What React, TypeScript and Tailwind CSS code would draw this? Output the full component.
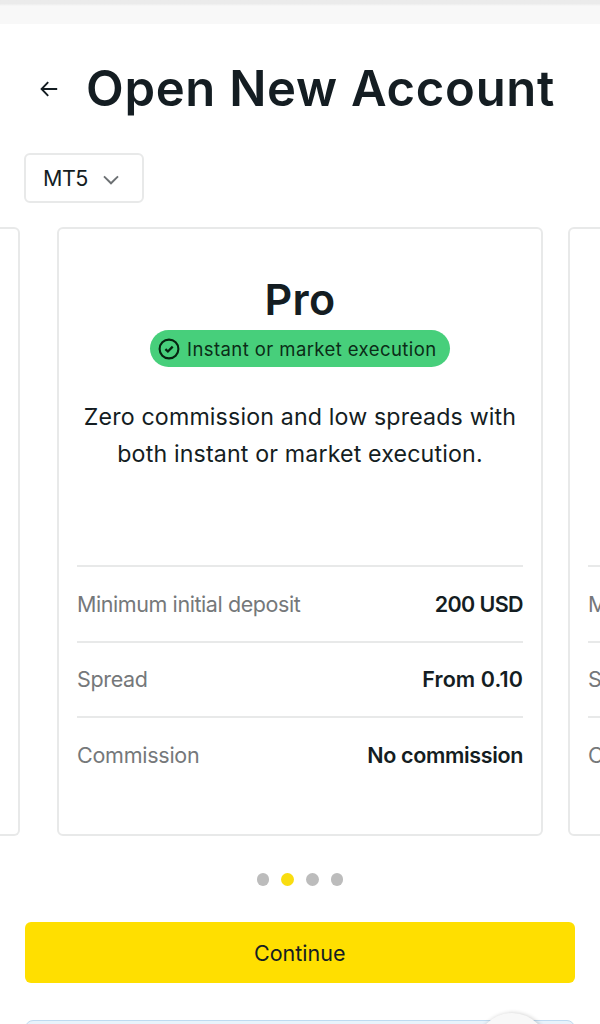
import { useState } from "react";

type Account = {
    name: string;
    badge: string;
    description: string[];
    details: { label: string; value: string }[];
};

const proAccount: Account = {
    name: "Pro",
    badge: "Instant or market execution",
    description: ["Zero commission and low spreads with", "both instant or market execution."],
    details: [
        { label: "Minimum initial deposit", value: "200 USD" },
        { label: "Spread", value: "From 0.10" },
        { label: "Commission", value: "No commission" },
    ],
};

const labelTracking = ["tracking-[-0.42px]", "tracking-[-0.35px]", "tracking-[-0.25px]"];
const valueTracking = ["tracking-[-0.6px]", "tracking-[0.1px]", "tracking-[-0.35px]"];

const ArrowLeft = () => (
    <svg width="18" height="16" viewBox="0 0 18 16" fill="none" stroke="#141d22" strokeWidth="1.9">
        <path d="M8.2 1.2 1.6 8l6.6 6.8M1.6 8H17.2" />
    </svg>
);

const ChevronDown = () => (
    <svg width="16" height="10" viewBox="0 0 16 10" fill="none" stroke="#6c7073" strokeWidth="1.9">
        <path d="m1 1.4 7 6.9 7-6.9" />
    </svg>
);

const CheckBadge = () => (
    <svg width="22" height="22" viewBox="0 0 22 22" fill="none" stroke="#062410" strokeWidth="2.1">
        <circle cx="11" cy="11" r="9.4" />
        <path d="m7.4 11.1 2.5 2.4 4.8-4.9" strokeWidth="2.3" />
    </svg>
);

const AccountCard = ({ account }: { account: Account }) => (
    <div className="flex h-[609px] w-[486px] shrink-0 flex-col rounded-md border-2 border-[#e8e9e9] bg-white px-[18px]">
        <h2 className="mt-[45px] text-center text-[43px] leading-[50px] font-semibold tracking-[0.3px]">{account.name}</h2>
        <div className="mt-[6px] flex h-[37px] w-[300px] items-center gap-[7px] self-center rounded-full bg-[#47cf7b] pl-2 text-[#0b2c17]">
            <CheckBadge />
            <span className="pt-[3px] text-[18.5px] whitespace-nowrap tracking-[0.42px]">{account.badge}</span>
        </div>
        <div className="mt-[32px] text-center text-[23.2px] leading-[37px]">
            {account.description.map((line) => (
                <p key={line} className="-mx-2 whitespace-nowrap tracking-[0.15px]">{line}</p>
            ))}
        </div>
        <div className="mt-[92px] text-[21.5px]">
            {account.details.map((row, i) => (
                <div key={row.label} className="flex h-[75.5px] items-center justify-between border-t-2 border-[#e8e9e9] whitespace-nowrap">
                    <span className={`text-[#75787a] ${labelTracking[i]}`}>{row.label}</span>
                    <span className={`font-semibold ${valueTracking[i]}`}>{row.value}</span>
                </div>
            ))}
        </div>
    </div>
);

// neighbouring slides only show their edge and the start of each label
const NextCard = () => (
    <div className="ml-[25px] h-[609px] w-[486px] shrink-0 rounded-md border-2 border-[#e8e9e9] px-[18px] pt-[336px] text-[21.5px]">
        {proAccount.details.map((row) => (
            <div key={row.label} className="flex h-[75.5px] items-center border-t-2 border-[#e8e9e9] text-[#75787a]">
                {row.label}
            </div>
        ))}
    </div>
);

const App = () => {
    const [activeSlide, setActiveSlide] = useState(1);

    return (
        <div className="relative h-[1024px] w-[600px] overflow-hidden bg-white font-['Inter',sans-serif] text-[#141d22]">
            <div className="h-6 bg-[#f8f8f8]">
                <div className="h-[6px] bg-linear-to-b from-[#ebebeb] from-60% to-[#f8f8f8]" />
            </div>

            <header className="flex h-[129px] items-center pl-[40px]">
                <button aria-label="Back">
                    <ArrowLeft />
                </button>
                <h1 className="ml-[28px] text-[49px] leading-[60px] font-semibold whitespace-nowrap tracking-[0.72px]">Open New Account</h1>
            </header>

            <button className="ml-[24px] flex h-[50px] w-[120px] items-center rounded-md border-2 border-[#e8e9e9] pl-[17px] text-[21.5px] tracking-[-0.5px]">
                MT5
                <span className="ml-[15px] pt-[3px]">
                    <ChevronDown />
                </span>
            </button>

            <div className="mt-[24px] flex w-[1200px]">
                <div className="mr-[37px] h-[609px] w-[20px] rounded-r-md border-2 border-l-0 border-[#e8e9e9]" />
                <AccountCard account={proAccount} />
                <NextCard />
            </div>

            <div className="mt-[37px] flex justify-center gap-[12px]">
                {[0, 1, 2, 3].map((slide) => (
                    <button
                        key={slide}
                        aria-label={`Slide ${slide + 1}`}
                        onClick={() => setActiveSlide(slide)}
                        className={`size-[12.6px] rounded-full ${slide === activeSlide ? "bg-[#f9dd10]" : "bg-[#bcbcbc]"}`}
                    />
                ))}
            </div>

            <button className="mt-[36.4px] ml-[24.5px] flex h-[61.5px] w-[550.5px] items-center justify-center rounded-md bg-[#ffdf00] text-[21.5px]">
                Continue
            </button>

            <div className="mt-[37px] ml-[25px] h-[60px] w-[550px] rounded-lg border border-[#bfdaf0] bg-[#e8f3fb]" />

            {/* floating chat bubble */}
            <div className="absolute top-[1013px] left-[476px] size-[72px] rounded-full bg-[#f8f8f8] shadow-[1px_0_4px_rgba(0,0,0,0.2)]" />
        </div>
    );
};

export default App;
